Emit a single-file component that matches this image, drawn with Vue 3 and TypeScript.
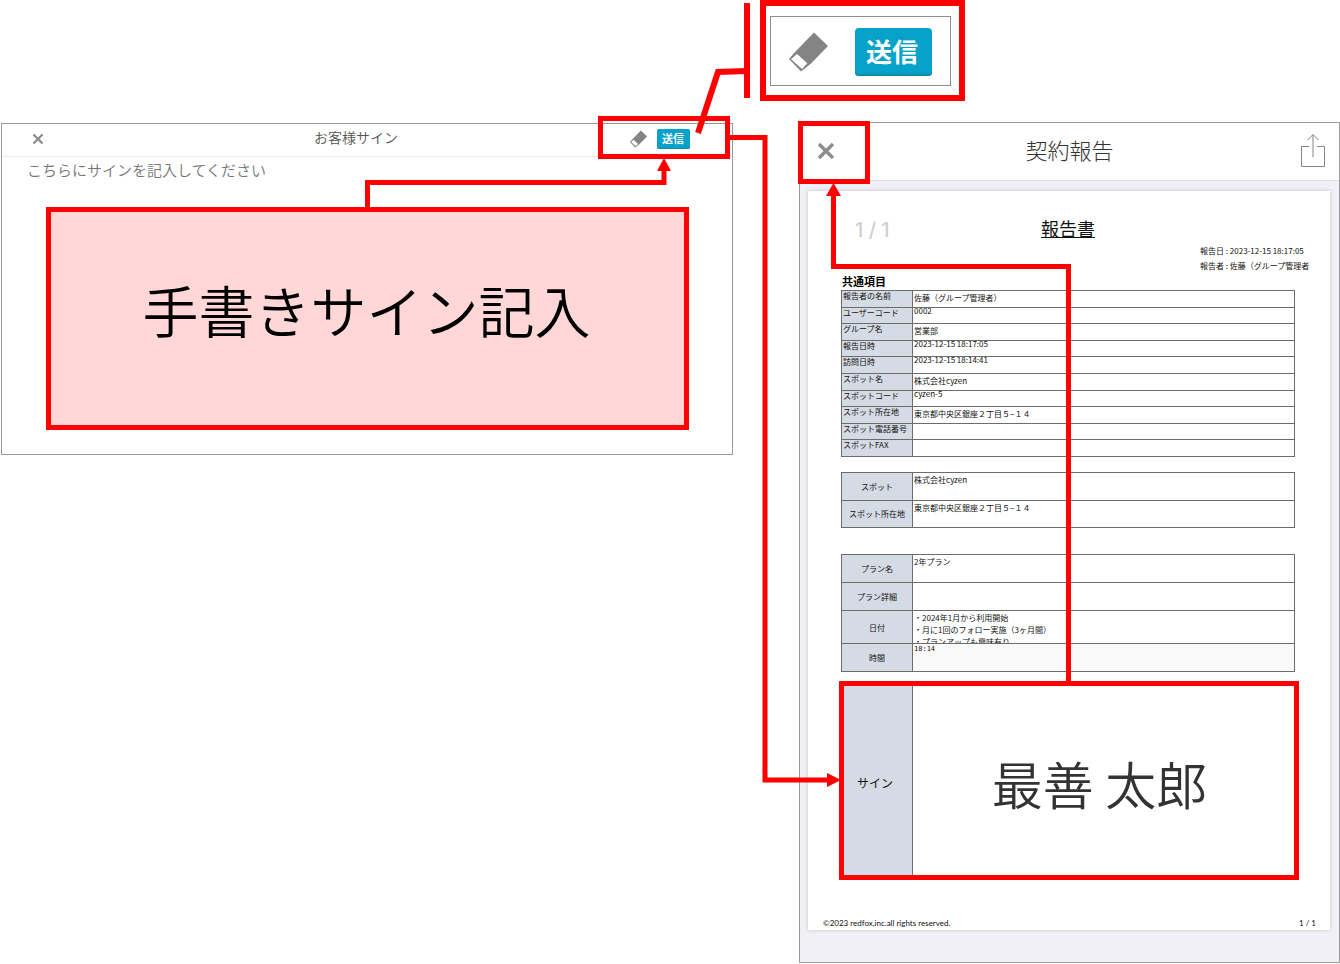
<script setup lang="ts">
interface Row {
  label: string
  value: string
  latin?: boolean
}

const common: Row[] = [
  { label: '報告者の名前', value: '佐藤（グループ管理者）' },
  { label: 'ユーザーコード', value: '0002', latin: true },
  { label: 'グループ名', value: '営業部' },
  { label: '報告日時', value: '2023-12-15 18:17:05', latin: true },
  { label: '訪問日時', value: '2023-12-15 18:14:41', latin: true },
  { label: 'スポット名', value: '株式会社cyzen' },
  { label: 'スポットコード', value: 'cyzen-5', latin: true },
  { label: 'スポット所在地', value: '東京都中央区銀座２丁目５−１４' },
  { label: 'スポット電話番号', value: '' },
  { label: 'スポットFAX', value: '' },
]

const spot: Row[] = [
  { label: 'スポット', value: '株式会社cyzen' },
  { label: 'スポット所在地', value: '東京都中央区銀座２丁目５−１４' },
]

const notes: string[] = [
  '・2024年1月から利用開始',
  '・月に1回のフォロー実施（3ヶ月間）',
  '・プランアップも興味有り',
]
</script>

<template>
  <main class="canvas">
    <div class="top">
      <section class="callout">
        <div class="callout-inner">
          <button type="button" class="icon" aria-label="消去">
            <svg class="eraser-lg" viewBox="0 0 39 40">
              <path d="M25 0.5 39 14 21.500 32 12 39.500 0 27 6.500 19.500Z" fill="#848484" />
              <path d="M2 27.300 8 22 18.300 31.300 13 37Z" fill="#fff" />
            </svg>
          </button>
          <button type="button" class="send send-lg">送信</button>
        </div>
      </section>
    </div>

    <div class="panels">
      <section class="sign-panel">
        <header class="sign-head">
          <button type="button" class="icon close" aria-label="閉じる">
            <svg class="x-sm" viewBox="0 0 12 12">
              <path d="M1.500 1.500 10.500 10.500M10.500 1.500 1.500 10.500" stroke="#8c8c8c" stroke-width="2.300" />
            </svg>
          </button>
          <h1>お客様サイン</h1>
          <div class="actions">
            <button type="button" class="icon" aria-label="消去">
              <svg class="eraser-sm" viewBox="0 0 39 40">
                <path d="M25 0.5 39 14 21.500 32 12 39.500 0 27 6.500 19.500Z" fill="#848484" />
                <path d="M3 27.300 8 22 18.300 31.300 13 36Z" fill="#fff" />
              </svg>
            </button>
            <button type="button" class="send send-sm">送信</button>
          </div>
        </header>
        <p class="hint">こちらにサインを記入してください</p>
        <div class="sign-area">手書きサイン記入</div>
      </section>

      <section class="report-panel">
        <header class="report-head">
          <button type="button" class="icon close" aria-label="閉じる">
            <svg class="x-lg" viewBox="0 0 18 18">
              <path d="M2 2 16 16M16 2 2 16" stroke="#8c8c8c" stroke-width="3.400" />
            </svg>
          </button>
          <h1>契約報告</h1>
          <button type="button" class="icon share" aria-label="共有">
            <svg class="share-icon" viewBox="0 0 25 35">
              <path
                d="M8 13.500H0.500V33.500H23.500V13.500H16M12 24V1.500M6.500 7 12 1.500 17.500 7"
                fill="none"
                stroke="#858585"
              />
            </svg>
          </button>
        </header>

        <article class="sheet">
          <div class="sheet-head">
            <span class="pager">1 / 1</span>
            <h2>報告書</h2>
          </div>
          <div class="meta">
            <div>報告日 : 2023-12-15 18:17:05</div>
            <div>報告者 : 佐藤（グループ管理者</div>
          </div>

          <table class="common">
            <caption>共通項目</caption>
            <tbody>
              <tr v-for="row in common" :key="row.label">
                <th scope="row">{{ row.label }}</th>
                <td :class="{ latin: row.latin }">{{ row.value }}</td>
              </tr>
            </tbody>
          </table>

          <table class="spot">
            <tbody>
              <tr v-for="row in spot" :key="row.label">
                <th scope="row">{{ row.label }}</th>
                <td>{{ row.value }}</td>
              </tr>
            </tbody>
          </table>

          <table class="plan">
            <tbody>
              <tr>
                <th scope="row">プラン名</th>
                <td>2年プラン</td>
              </tr>
              <tr>
                <th scope="row">プラン詳細</th>
                <td></td>
              </tr>
              <tr class="tall">
                <th scope="row">日付</th>
                <td>
                  <div class="notes">
                    <div v-for="note in notes" :key="note">{{ note }}</div>
                  </div>
                </td>
              </tr>
              <tr>
                <th scope="row">時間</th>
                <td class="time">18:14</td>
              </tr>
            </tbody>
          </table>

          <table class="signature">
            <tbody>
              <tr>
                <th scope="row">サイン</th>
                <td>最善 太郎</td>
              </tr>
            </tbody>
          </table>

          <footer class="sheet-foot">
            <span>©2023 redfox,inc.all rights reserved.</span>
            <span>1 / 1</span>
          </footer>
        </article>
      </section>
    </div>

    <svg class="marks" viewBox="0 0 1340 964" aria-hidden="true">
      <g fill="none" stroke="#f00" stroke-width="5">
        <path d="M747 3V98" stroke-width="6" />
        <path d="M698 133 718 72 747 71" stroke-width="6" />
        <rect x="600.5" y="118.500" width="127" height="38" />
        <rect x="800.5" y="123.500" width="67" height="58" />
        <rect x="841.500" y="683.500" width="455" height="194" />
        <path d="M367.500 208V182.500H664V168" />
        <path d="M728 137.500H765V780H830" />
        <path d="M1068.500 683V266.500H833.500V194" />
      </g>
      <g fill="#f00">
        <path d="M664 158 671 171H657Z" />
        <path d="M841 780 827 773V787Z" />
        <path d="M833.500 183 841 196H826Z" />
      </g>
    </svg>
  </main>
</template>

<style>
body {
  margin: 0;
  background: #fff;
}
</style>

<style scoped>
.canvas {
  position: relative;
  box-sizing: border-box;
  font-family: "Noto Sans CJK JP", sans-serif;
  color: #111;
}
.canvas * {
  box-sizing: border-box;
}
h1,
h2,
p {
  margin: 0;
}
button {
  border: 0;
  padding: 0;
  margin: 0;
  font-family: inherit;
  cursor: pointer;
}
.icon {
  display: flex;
  align-items: center;
  justify-content: center;
  background: none;
}
svg {
  display: block;
}
.marks {
  position: absolute;
  top: 0;
  left: 0;
  width: 100%;
  pointer-events: none;
}

.top {
  display: grid;
  grid-template-columns: 760fr 205px 375fr;
  padding-bottom: 21px;
}
.callout {
  grid-column: 2;
  border: 6px solid #f00;
  padding: 10px 8px 9px 4px;
}
.callout-inner {
  display: flex;
  align-items: center;
  justify-content: space-between;
  height: 70px;
  border: 1px solid #8e8e8e;
  padding: 2px 18px 0;
}
.eraser-lg {
  width: 39px;
  height: 40px;
}
.eraser-sm {
  width: 17px;
  height: 18px;
}
.send {
  background: #07a2ca;
  color: #fff;
  font-weight: 700;
}
.send-lg {
  width: 77px;
  height: 48px;
  padding: 0 3px 2px 0;
  border-radius: 4px;
  font-size: 26px;
  line-height: 46px;
  box-shadow: inset 0 -2px 0 #1489ab;
}
.send-sm {
  width: 33px;
  height: 20px;
  padding: 0 1px 2px 0;
  border-radius: 2px;
  font-size: 11px;
  line-height: 18px;
  box-shadow: inset 0 -1px 0 #1489ab;
}

.panels {
  display: grid;
  grid-template-columns: 732fr 541fr;
  column-gap: 66px;
  align-items: start;
  padding-left: 1px;
}
.sign-panel {
  margin-top: 1px;
  border: 1px solid #9a9a9a;
  padding-bottom: 24px;
}
.sign-head {
  display: grid;
  grid-template-columns: 1fr auto 1fr;
  align-items: center;
  height: 33px;
  padding: 0 42px 3px 20px;
  border-bottom: 1px solid #ececec;
}
.sign-head h1 {
  padding-bottom: 3px;
  font-size: 14px;
  line-height: 20px;
  font-weight: 350;
  color: #555;
}
.close {
  justify-self: start;
}
.sign-head .close {
  padding: 0 10px;
}
.x-sm {
  width: 12px;
  height: 12px;
}
.actions {
  display: flex;
  gap: 10px;
  align-items: center;
  justify-self: end;
}
.hint {
  padding: 1px 0 0 25px;
  font-size: 15px;
  line-height: 24px;
  font-weight: 350;
  color: #777;
}
.sign-area {
  display: flex;
  align-items: center;
  justify-content: center;
  height: 223px;
  margin: 25px 43px 0 44px;
  padding: 0 2px 20px 0;
  border: 5px solid #f00;
  background: #ffd7d7;
  font-size: 56px;
  line-height: 64px;
  font-weight: 350;
  color: #000;
}

.report-panel {
  border: 1px solid #9c9c9c;
  background: #f1f0f6;
  padding-bottom: 32px;
}
.report-head {
  display: grid;
  grid-template-columns: 1fr auto 1fr;
  align-items: center;
  height: 58px;
  padding: 0 13px 2px;
  border-bottom: 1px solid #dddde2;
  background: #fff;
}
.report-head h1 {
  padding-bottom: 4px;
  font-size: 22px;
  line-height: 32px;
  font-weight: 300;
  color: #333;
}
.report-head .close {
  padding: 0 4px;
}
.x-lg {
  width: 18px;
  height: 18px;
}
.share {
  justify-self: end;
}
.share-icon {
  width: 25px;
  height: 35px;
}

.sheet {
  margin: 10px 9px 0 8px;
  padding: 23px 35px 0 33px;
  background: #fff;
  box-shadow: 0 0 4px #c4c4ca;
  font-size: 8px;
}
.sheet-head {
  display: grid;
  grid-template-columns: 1fr auto 1fr;
  align-items: center;
  height: 30px;
}
.sheet-head h2 {
  grid-column: 2;
  padding-bottom: 2px;
  font-size: 18px;
  line-height: 28px;
  font-weight: 400;
  text-decoration: underline;
}
.pager {
  padding: 2px 0 0 14px;
  font-family: Inter, sans-serif;
  font-size: 20px;
  line-height: 28px;
  font-weight: 500;
  color: #d0d0d0;
}
.meta {
  width: 115px;
  margin: -1px -20px 1px auto;
  line-height: 15px;
  white-space: nowrap;
  overflow: hidden;
}
table {
  width: 100%;
  table-layout: fixed;
  border-collapse: collapse;
}
caption {
  height: 16px;
  padding-left: 1px;
  font-size: 11px;
  line-height: 15px;
  font-weight: 700;
  text-align: left;
  color: #000;
}
th,
td {
  border: 1px solid #6d6d6d;
  padding: 0 0 0 1px;
  text-align: left;
  vertical-align: top;
  font-weight: 400;
  line-height: 14px;
}
th {
  width: 71px;
  background: #d5dbe4;
}
.common {
  height: 167px;
}
.common tr {
  height: 16px;
}
.common th {
  line-height: 9px;
}
.common .latin {
  line-height: 6px;
}
.spot {
  height: 56px;
  margin-top: 15px;
}
.plan {
  margin-top: 26px;
}
.plan tr {
  height: 28px;
}
.plan .tall {
  height: 33px;
}
.spot th,
.plan th,
.signature th {
  padding: 1px 0 0;
  text-align: center;
  vertical-align: middle;
}
.notes {
  height: 32px;
  padding-top: 1px;
  line-height: 12px;
  overflow: hidden;
}
.plan .time {
  background: #f9f9f9;
  font-family: "DejaVu Sans Mono", monospace;
  font-size: 7px;
  line-height: 11px;
}
.signature {
  height: 196px;
  margin-top: 10px;
}
.signature th {
  padding: 6px 4px 0 0;
  font-size: 12px;
}
.signature td {
  padding: 6px 8px 0 0;
  font-size: 51px;
  font-weight: 350;
  line-height: 60px;
  text-align: center;
  vertical-align: middle;
  color: #333;
}
.sheet-foot {
  display: flex;
  justify-content: space-between;
  margin: 39px -21px 0 -18px;
  padding-bottom: 1px;
  font-family: Lato, sans-serif;
  line-height: 12px;
}
</style>
